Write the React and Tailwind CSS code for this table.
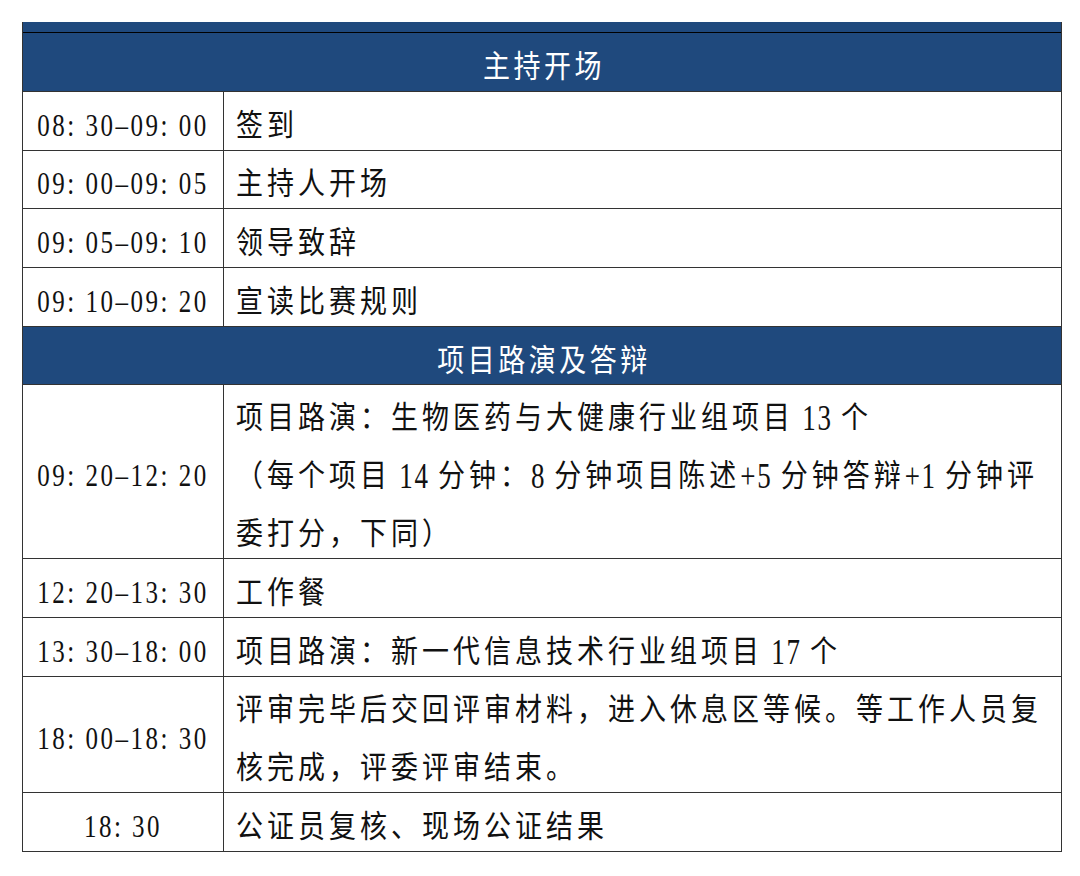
import React from 'react';

const font = { fontFamily: '"Liberation Serif", "Noto Sans CJK SC", serif' };

const rows = [
  { type: 'head', text: '主持开场', h: 'h-[60px]', top: true },
  { time: '08: 30–09: 00', lines: ['签到'], h: 'h-[59px]' },
  { time: '09: 00–09: 05', lines: ['主持人开场'], h: 'h-[58px]' },
  { time: '09: 05–09: 10', lines: ['领导致辞'], h: 'h-[59px]' },
  { time: '09: 10–09: 20', lines: ['宣读比赛规则'], h: 'h-[59px]' },
  { type: 'head', text: '项目路演及答辩', h: 'h-[58px]' },
  {
    time: '09: 20–12: 20',
    lines: [
      '项目路演：生物医药与大健康行业组项目 13 个',
      '（每个项目 14 分钟：8 分钟项目陈述+5 分钟答辩+1 分钟评',
      '委打分，下同）',
    ],
    h: 'h-[174px]',
  },
  { time: '12: 20–13: 30', lines: ['工作餐'], h: 'h-[59px]' },
  { time: '13: 30–18: 00', lines: ['项目路演：新一代信息技术行业组项目 17 个'], h: 'h-[59px]' },
  {
    time: '18: 00–18: 30',
    lines: ['评审完毕后交回评审材料，进入休息区等候。等工作人员复', '核完成，评委评审结束。'],
    h: 'h-[116px]',
  },
  { time: '18: 30', lines: ['公证员复核、现场公证结果'], h: 'h-[59px]' },
];

// latin runs get their own spacing and a taller look, like the Times digits in the doc
const Line = ({ text }) => (
  <span className="inline-block scale-y-[1.12]">
    {text.split(/([\x20-\x7e]+)/).map((part, k) =>
      /^[\x20-\x7e]+$/.test(part) ? (
        <span key={k} className="inline-block scale-y-[1.15] tracking-[1.6px] whitespace-pre">
          {part}
        </span>
      ) : (
        <span key={k}>{part}</span>
      )
    )}
  </span>
);

export default function App() {
  return (
    <div className="min-h-[876px] w-[1080px] bg-white pt-[22px] pl-[22px] text-[27px] tracking-[4px] text-[#111]" style={font}>
      <div className="w-[1040px] border-x border-[#333]">
        {/* cut-off strip of the previous header */}
        <div className="h-[10px] bg-[#1f497d]" />
        {rows.map((r, i) =>
          r.type === 'head' ? (
            <div
              key={i}
              className={`${r.h} flex items-center justify-center border-b border-[#333] bg-[#1f497d] pt-[11px] pl-[4px] text-white ${r.top ? 'border-t border-t-black' : ''}`}
            >
              <span className="inline-block scale-y-[1.12] tracking-[3.5px]">{r.text}</span>
            </div>
          ) : (
            <div key={i} className={`${r.h} flex border-b border-[#333]`}>
              <div className="flex w-[201px] shrink-0 items-center justify-center border-r border-[#333] pt-[9px] whitespace-nowrap">
                <span className="inline-block scale-y-[1.3] text-[25px] tracking-[2.5px]">{r.time}</span>
              </div>
              <div className="flex flex-1 flex-col justify-center pt-[9px] pl-[12px] leading-[58px] whitespace-nowrap">
                {r.lines.map((l, j) => (
                  <div key={j}>
                    <Line text={l} />
                  </div>
                ))}
              </div>
            </div>
          )
        )}
      </div>
    </div>
  );
}
